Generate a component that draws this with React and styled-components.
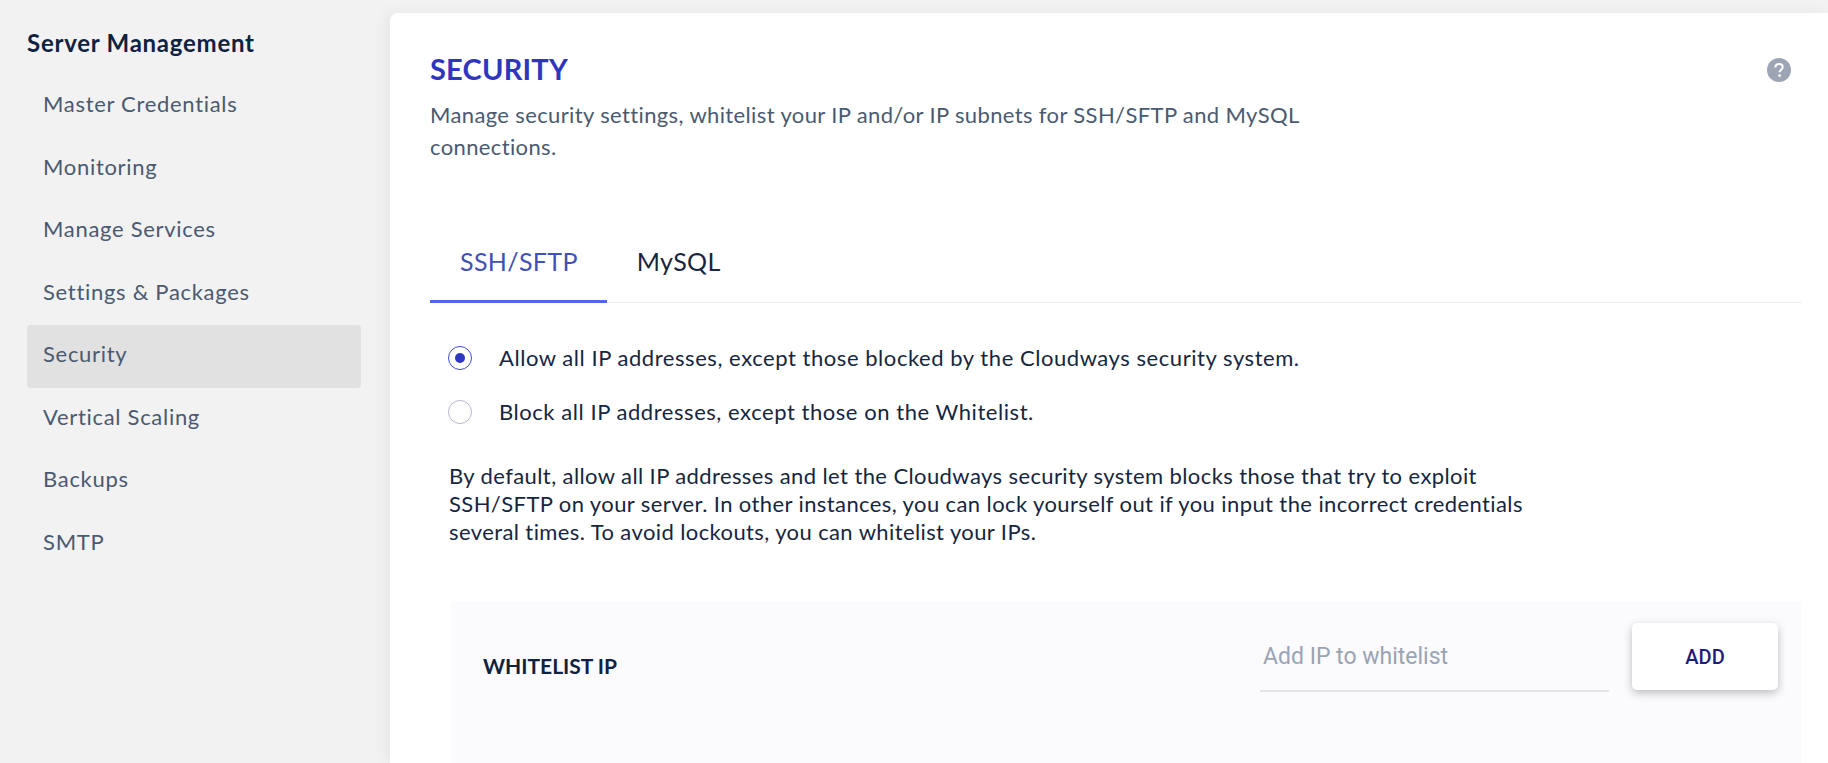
import React from "react";
import styled, { createGlobalStyle } from "styled-components";

const GlobalStyle = createGlobalStyle`
  html, body {
    margin: 0;
    height: 100%;
    overflow: hidden;
    background: #f2f2f3;
  }
  * { box-sizing: border-box; }
`;

const Page = styled.div`
  display: flex;
  height: 763px;
  font-family: "Lato", "Liberation Sans", sans-serif;
  color: #16263f;
`;

const Sidebar = styled.aside`
  width: 390px;
  flex: none;
  padding: 27px 29px 0 27px;
`;

const SideTitle = styled.h3`
  margin: 0 0 16px;
  font-size: 24px;
  line-height: 32px;
  font-weight: 700;
  letter-spacing: 0.75px;
  color: #0f2240;
`;

const SideItem = styled.div`
  height: 62.5px;
  display: flex;
  align-items: center;
  padding: 0 0 5px 16px;
  border-radius: 4px;
  font-size: 22px;
  letter-spacing: 0.7px;
  color: #4a5a70;
  background: ${(p) => (p.$active ? "#e1e1e1" : "transparent")};
`;

const Card = styled.main`
  flex: 1;
  margin-top: 13px;
  padding: 39px 0 0 40px;
  background: #fff;
  border-radius: 8px 0 0 0;
  box-shadow: -4px 0 16px rgba(0, 0, 0, 0.05);
`;

const HeadRow = styled.div`
  display: flex;
  justify-content: space-between;
  padding-right: 37px;
`;

const Title = styled.h1`
  margin: 0;
  font-size: 29px;
  line-height: 34px;
  font-weight: 700;
  letter-spacing: 0.2px;
  color: #2f36bd;
`;

const HelpIcon = styled.svg`
  width: 24px;
  height: 24px;
  margin-top: 6px;
`;

const Lead = styled.p`
  margin: 13px 0 0;
  width: 890px;
  font-size: 22px;
  line-height: 32px;
  letter-spacing: 0.37px;
  color: #4a5a70;
`;

const TabBar = styled.div`
  display: flex;
  margin: 59px 26px 0 0;
  border-bottom: 1px solid #eceef1;
`;

const Tab = styled.div`
  height: 81px;
  padding: 0 29px 0 30px;
  display: flex;
  align-items: center;
  font-size: 25px;
  letter-spacing: 0.35px;
  color: ${(p) => (p.$active ? "#3f51b5" : "#16263f")};
  border-bottom: ${(p) => (p.$active ? "3px solid #4f66f1" : "3px solid transparent")};
  margin-bottom: -1px;
`;

const Radios = styled.div`
  margin-top: 39px;
  padding-left: 18px;
  display: flex;
  flex-direction: column;
  gap: 23px;
`;

const RadioRow = styled.label`
  display: flex;
  align-items: center;
  gap: 27px;
  height: 31px;
  font-size: 22px;
  letter-spacing: 0.55px;
  color: #16263f;
`;

const RadioDot = styled.span`
  width: 24px;
  height: 24px;
  flex: none;
  border-radius: 50%;
  border: 1px solid ${(p) => (p.$on ? "#3f4ed0" : "#b4b9c6")};
  display: flex;
  align-items: center;
  justify-content: center;

  &::after {
    content: "";
    width: 10px;
    height: 10px;
    border-radius: 50%;
    background: ${(p) => (p.$on ? "#3038c0" : "transparent")};
  }
`;

const Note = styled.p`
  margin: 35px 0 0 19px;
  width: 1090px;
  font-size: 22px;
  line-height: 28px;
  letter-spacing: 0.4px;
  color: #16263f;
`;

const Panel = styled.section`
  margin: 55px 0 0 21px;
  width: 1350px;
  height: 200px;
  padding: 22px 23px 0 32px;
  display: flex;
  align-items: flex-start;
  background: #fbfbfe;
`;

const PanelLabel = styled.div`
  flex: 1;
  height: 84px;
  display: flex;
  align-items: center;
  font-size: 21px;
  font-weight: 700;
  color: #0f2240;
`;

const IpInput = styled.input`
  width: 349px;
  height: 69px;
  padding: 0 3px;
  border: 0;
  border-bottom: 2px solid #e2e4ea;
  background: transparent;
  outline: none;
  font-family: "Roboto", sans-serif;
  font-size: 23px;

  &::placeholder {
    color: #9aa3b3;
    opacity: 1;
  }
`;

const AddButton = styled.button`
  width: 146px;
  height: 67px;
  margin-left: 23px;
  border: 0;
  border-radius: 5px;
  background: #fff;
  box-shadow: 0 3px 8px rgba(0, 0, 0, 0.25);
  font-family: "Roboto", sans-serif;
  font-size: 20px;
  font-weight: 500;
  color: #1b1d78;
`;

const sideItems = [
  "Master Credentials",
  "Monitoring",
  "Manage Services",
  "Settings & Packages",
  "Security",
  "Vertical Scaling",
  "Backups",
  "SMTP",
];

export default function App() {
  return (
    <Page>
      <GlobalStyle />
      <Sidebar>
        <SideTitle>Server Management</SideTitle>
        {sideItems.map((item) => (
          <SideItem key={item} $active={item === "Security"}>
            {item}
          </SideItem>
        ))}
      </Sidebar>
      <Card>
        <HeadRow>
          <Title>SECURITY</Title>
          <HelpIcon viewBox="0 0 24 24">
            <circle cx="12" cy="12" r="12" fill="#9da5b4" />
            <path
              d="M8.4 9.4c0-2.2 1.6-3.5 3.7-3.5s3.6 1.2 3.6 3.1c0 2.6-3.1 2.7-3.1 5.2"
              fill="none"
              stroke="#fff"
              strokeWidth="2"
            />
            <circle cx="12.6" cy="17.6" r="1.4" fill="#fff" />
          </HelpIcon>
        </HeadRow>
        <Lead>
          Manage security settings, whitelist your IP and/or IP subnets for SSH/SFTP and MySQL connections.
        </Lead>
        <TabBar>
          <Tab $active>SSH/SFTP</Tab>
          <Tab>MySQL</Tab>
        </TabBar>
        <Radios>
          <RadioRow>
            <RadioDot $on />
            Allow all IP addresses, except those blocked by the Cloudways security system.
          </RadioRow>
          <RadioRow>
            <RadioDot />
            Block all IP addresses, except those on the Whitelist.
          </RadioRow>
        </Radios>
        <Note>
          By default, allow all IP addresses and let the Cloudways security system blocks those that try to exploit
          SSH/SFTP on your server. In other instances, you can lock yourself out if you input the incorrect credentials
          several times. To avoid lockouts, you can whitelist your IPs.
        </Note>
        <Panel>
          <PanelLabel>WHITELIST IP</PanelLabel>
          <IpInput placeholder="Add IP to whitelist" readOnly />
          <AddButton>ADD</AddButton>
        </Panel>
      </Card>
    </Page>
  );
}
